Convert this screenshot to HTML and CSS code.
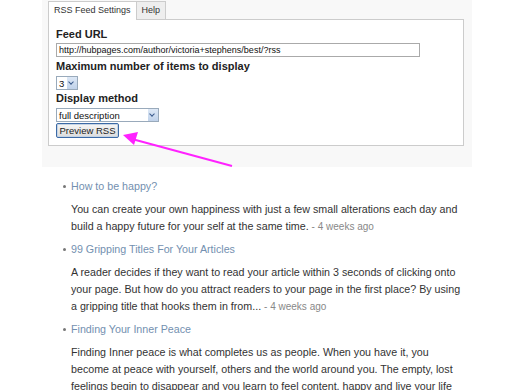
FILE: index.html
```html
<!DOCTYPE html>
<html lang="en">
<head>
  <meta charset="UTF-8">
  <title>RSS Feed Settings</title>
  <link rel="stylesheet" href="styles.css">
</head>
<body>
  <div class="settings">
    <div class="tabs">
      <span class="tab active">RSS Feed Settings</span>
      <span class="tab">Help</span>
    </div>
    <div class="panel">
      <div class="field-label">Feed URL</div>
      <div class="ipt">http://hubpages.com/author/victoria+stephens/best/?rss</div>
      <div class="field-label">Maximum number of items to display</div>
      <div class="sel sel-small"><span>3</span><i class="drop"></i></div>
      <div class="field-label">Display method</div>
      <div class="sel sel-wide"><span>full description</span><i class="drop"></i></div>
      <button class="preview">Preview RSS</button>
    </div>
    <svg class="arrow" width="120" height="40" viewBox="0 0 120 40">
      <line x1="112" y1="36" x2="12" y2="9" stroke="#f2f" stroke-width="2"/>
      <polygon points="3,5 18,2 14,15" fill="#f2f"/>
    </svg>
  </div>

  <ul class="feed">
    <li>
      <a class="title" href="#">How to be happy?</a>
      <p>You can create your own happiness with just a few small alterations each day and build a happy future for your self at the same time. <span class="ago">- 4 weeks ago</span></p>
    </li>
    <li>
      <a class="title" href="#">99 Gripping Titles For Your Articles</a>
      <p>A reader decides if they want to read your article within 3 seconds of clicking onto your page. But how do you attract readers to your page in the first place? By using a gripping title that hooks them in from... <span class="ago">- 4 weeks ago</span></p>
    </li>
    <li>
      <a class="title" href="#">Finding Your Inner Peace</a>
      <p>Finding Inner peace is what completes us as people. When you have it, you become at peace with yourself, others and the world around you. The empty, lost feelings begin to disappear and you learn to feel content, happy and live your life</p>
    </li>
  </ul>
</body>
</html>
```

FILE: styles.css
```css
html, body{
  margin: 0;
  padding: 0;
  background-color: #fff;
  font-family: "Liberation Sans", Arial, sans-serif;
}

.settings{
  position: relative;
  margin-left: 42px;
  width: 416px;
  height: 167px;
  padding: 0 8px 0 6px;
  background-color: #f8f8f8;
}
.tabs{
  display: flex;
  padding-top: 1px;
}
.tab{
  font-size: 9px;
  color: #333;
  line-height: 11px;
  padding: 3px 5px 3px;
  border: 1px solid #ccc;
  border-bottom: 0;
  background-color: #eee;
}
.tab.active{
  background-color: #fff;
  border-right: 0;
  padding-bottom: 4px;
  margin-bottom: -1px;
  position: relative;
}
.panel{
  border: 1px solid #ccc;
  background-color: #fff;
  padding: 7px 7px 7px;
}
.field-label{
  font-size: 11px;
  font-weight: bold;
  color: #222;
  line-height: 15px;
  margin-bottom: 1px;
}
.ipt{
  width: 358px;
  height: 12px;
  border: 1px solid #aaa;
  font-size: 9px;
  line-height: 12px;
  padding: 0 2px;
  color: #111;
  margin-bottom: 2px;
}
.sel{
  display: flex;
  align-items: center;
  justify-content: space-between;
  border: 1px solid #9ab;
  height: 12px;
  font-size: 9.5px;
  color: #111;
  padding-left: 2px;
  margin: 2px 0 1px;
  background-color: #fff;
}
.sel-small{
  width: 18px;
}
.sel-wide{
  width: 99px;
}
.drop{
  width: 10px;
  height: 12px;
  background: linear-gradient(#dde8f6, #c0d2ea);
  position: relative;
}
.drop::after{
  content: "";
  position: absolute;
  left: 2px;
  top: 3px;
  width: 3px;
  height: 3px;
  border-right: 1.5px solid #3a5a8c;
  border-bottom: 1.5px solid #3a5a8c;
  transform: rotate(45deg);
}
.preview{
  display: block;
  font-family: "Liberation Sans", Arial, sans-serif;
  font-size: 9.5px;
  color: #222;
  width: 63px;
  height: 15px;
  padding: 0;
  line-height: 11px;
  border: 1px solid #3c6aa6;
  box-shadow: inset 0 0 0 1px #c6d4e4;
  background: linear-gradient(#f6f6f6, #dcdcdc);
  border-radius: 2px;
}
.arrow{
  position: absolute;
  left: 78px;
  top: 130px;
}

.feed{
  list-style: none;
  margin: 12px 0 0;
  padding: 0 0 0 71px;
  width: 392px;
}
.feed li{
  position: relative;
  margin-bottom: 7px;
}
.feed li::before{
  content: "";
  position: absolute;
  left: -8px;
  top: 6px;
  width: 3px;
  height: 3px;
  border-radius: 50%;
  background-color: #777;
}
.title{
  display: block;
  font-size: 10.7px;
  line-height: 15px;
  color: #7390b0;
  text-decoration: none;
  margin-bottom: 7px;
}
.feed p{
  margin: 0;
  font-size: 10.7px;
  line-height: 17px;
  color: #333;
}
.ago{
  font-size: 10px;
  color: #888;
}
```
